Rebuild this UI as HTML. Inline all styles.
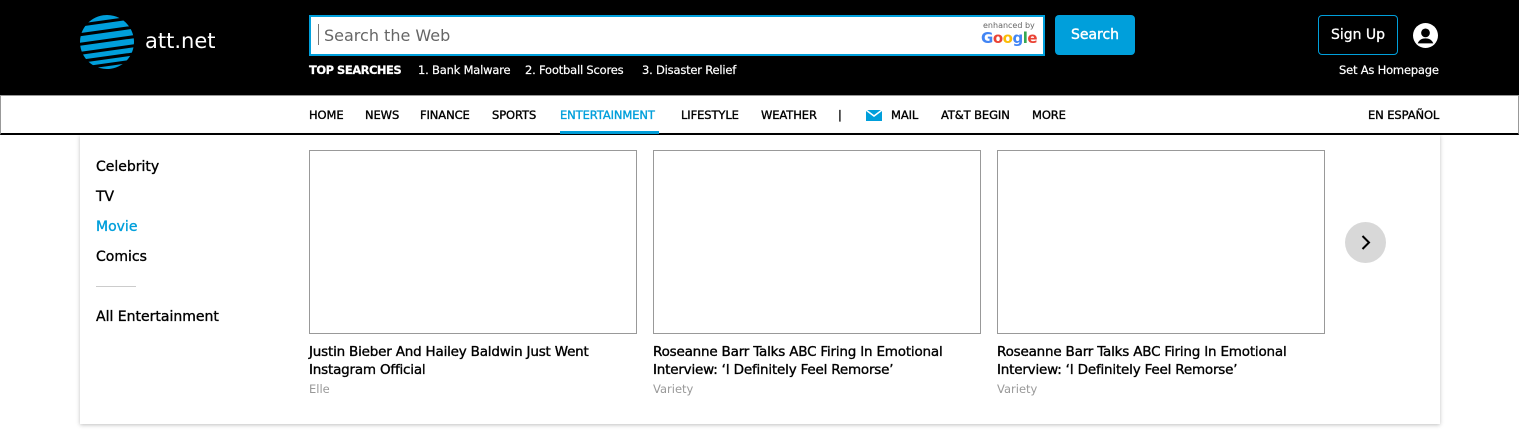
<!DOCTYPE html>
<html><head><meta charset="utf-8"><style>
*{margin:0;padding:0;box-sizing:border-box}
body{width:1519px;height:448px;background:#fff;font-family:"DejaVu Sans","Liberation Sans",sans-serif;position:relative;overflow:hidden}
.a{position:absolute;white-space:nowrap}
#top{position:absolute;left:0;top:0;width:1519px;height:95px;background:#000}
#nav{position:absolute;left:0;top:95px;width:1519px;height:40px;border:1px solid #999;border-bottom:2px solid #000;background:#fff}
.n{position:absolute;top:108px;font-size:11.5px;color:#000;letter-spacing:-0.1px;-webkit-text-stroke:0.35px currentColor}
.ts{position:absolute;top:63px;font-size:11.5px;color:#fff;letter-spacing:-0.2px;-webkit-text-stroke:0.2px currentColor}
#panel{position:absolute;left:80px;top:135px;width:1360px;height:289px;background:#fff;box-shadow:0 1px 4px rgba(0,0,0,.25)}
.s{position:absolute;left:96px;font-size:14px;color:#000;letter-spacing:0px;-webkit-text-stroke:0.35px currentColor}
.img{position:absolute;top:150px;width:328px;height:184px;border:1px solid #999}
.t{position:absolute;top:343px;width:330px;font-size:13.5px;line-height:18px;color:#000;letter-spacing:-0.2px;-webkit-text-stroke:0.35px currentColor}
.src{position:absolute;top:382px;font-size:11.5px;color:#999}
</style></head><body>
<div id="top"></div>
<svg class="a" style="left:79px;top:14px" width="56" height="56" viewBox="0 0 56 56">
<defs><clipPath id="c"><circle cx="28" cy="28" r="27"/></clipPath></defs>
<g clip-path="url(#c)" fill="#009fdb" transform="rotate(-8 28 28)">
<rect x="-5" y="0" width="66" height="6"/>
<rect x="-5" y="9" width="66" height="6.5"/>
<rect x="-5" y="18.5" width="66" height="6.5"/>
<rect x="-5" y="28" width="66" height="6"/>
<rect x="-5" y="37" width="66" height="5"/>
<rect x="-5" y="45" width="66" height="4"/>
<rect x="-5" y="52" width="66" height="4"/>
</g></svg>
<div class="a" style="left:145px;top:29px;font-size:21px;color:#fff">att.net</div>
<div class="a" style="left:309px;top:15px;width:736px;height:41px;border:2px solid #009fdb;background:#fff"></div>
<div class="a" style="left:318px;top:24px;width:1px;height:21px;background:#777"></div>
<div class="a" style="left:324px;top:26px;font-size:16px;color:#666">Search the Web</div>
<div class="a" style="left:983px;top:21px;font-size:8px;color:#666">enhanced by</div>
<div class="a" style="left:981px;top:29px;font-size:15px;font-weight:bold;letter-spacing:-0.5px"><span style="color:#4285f4">G</span><span style="color:#ea4335">o</span><span style="color:#fbbc05">o</span><span style="color:#4285f4">g</span><span style="color:#34a853">l</span><span style="color:#ea4335">e</span></div>
<div class="a" style="left:1055px;top:15px;width:80px;height:40px;background:#009fdb;border-radius:4px;color:#fff;font-size:14px;text-align:center;line-height:40px;-webkit-text-stroke:0.4px #fff">Search</div>
<div class="a" style="left:1318px;top:15px;width:80px;height:40px;border:1px solid #009fdb;border-radius:4px;color:#fff;font-size:14px;text-align:center;line-height:38px;-webkit-text-stroke:0.3px #fff">Sign Up</div>
<svg class="a" style="left:1413px;top:23px" width="25" height="25" viewBox="0 0 24 24"><circle cx="12" cy="12" r="12" fill="#fff"/><circle cx="12" cy="9.5" r="4.2" fill="#000"/><path d="M4.5 19.5c1.5-3.5 4-4.8 7.5-4.8s6 1.3 7.5 4.8" fill="#000"/></svg>
<div class="ts" style="left:309px;font-weight:bold;letter-spacing:-0.5px">TOP SEARCHES</div>
<div class="ts" style="left:418px">1. Bank Malware</div>
<div class="ts" style="left:525px">2. Football Scores</div>
<div class="ts" style="left:642px">3. Disaster Relief</div>
<div class="ts" style="left:1339px">Set As Homepage</div>
<div id="nav"></div>
<div class="n" style="left:309px">HOME</div>
<div class="n" style="left:365px">NEWS</div>
<div class="n" style="left:420px">FINANCE</div>
<div class="n" style="left:492px">SPORTS</div>
<div class="n" style="left:560px;color:#009fdb">ENTERTAINMENT</div>
<div class="a" style="left:560px;top:131px;width:99px;height:3px;background:#009fdb"></div>
<div class="n" style="left:681px">LIFESTYLE</div>
<div class="n" style="left:761px">WEATHER</div>
<div class="n" style="left:838px">|</div>
<svg class="a" style="left:866px;top:110px" width="16" height="11" viewBox="0 0 16 11"><rect width="16" height="11" fill="#009fdb"/><path d="M0 0l8 6 8-6" fill="none" stroke="#fff" stroke-width="1.5"/></svg>
<div class="n" style="left:891px">MAIL</div>
<div class="n" style="left:941px">AT&amp;T BEGIN</div>
<div class="n" style="left:1032px">MORE</div>
<div class="n" style="left:1368px">EN ESPAÑOL</div>
<div id="panel"></div>
<div class="s" style="top:159px">Celebrity</div>
<div class="s" style="top:189px">TV</div>
<div class="s" style="top:219px;color:#009fdb">Movie</div>
<div class="s" style="top:249px">Comics</div>
<div class="a" style="left:96px;top:286px;width:40px;height:1px;background:#ccc"></div>
<div class="s" style="top:309px">All Entertainment</div>
<div class="img" style="left:309px"></div>
<div class="img" style="left:653px"></div>
<div class="img" style="left:997px"></div>
<div class="t" style="left:309px">Justin Bieber And Hailey Baldwin Just Went Instagram Official</div>
<div class="t" style="left:653px">Roseanne Barr Talks ABC Firing In Emotional Interview: ‘I Definitely Feel Remorse’</div>
<div class="t" style="left:997px">Roseanne Barr Talks ABC Firing In Emotional Interview: ‘I Definitely Feel Remorse’</div>
<div class="src" style="left:309px">Elle</div>
<div class="src" style="left:653px">Variety</div>
<div class="src" style="left:997px">Variety</div>
<svg class="a" style="left:1345px;top:222px" width="41" height="41" viewBox="0 0 41 41"><circle cx="20.5" cy="20.5" r="20.5" fill="#d8d8d8"/><path d="M17.5 14l6.5 6.5-6.5 6.5" fill="none" stroke="#000" stroke-width="2"/></svg>
</body></html>
